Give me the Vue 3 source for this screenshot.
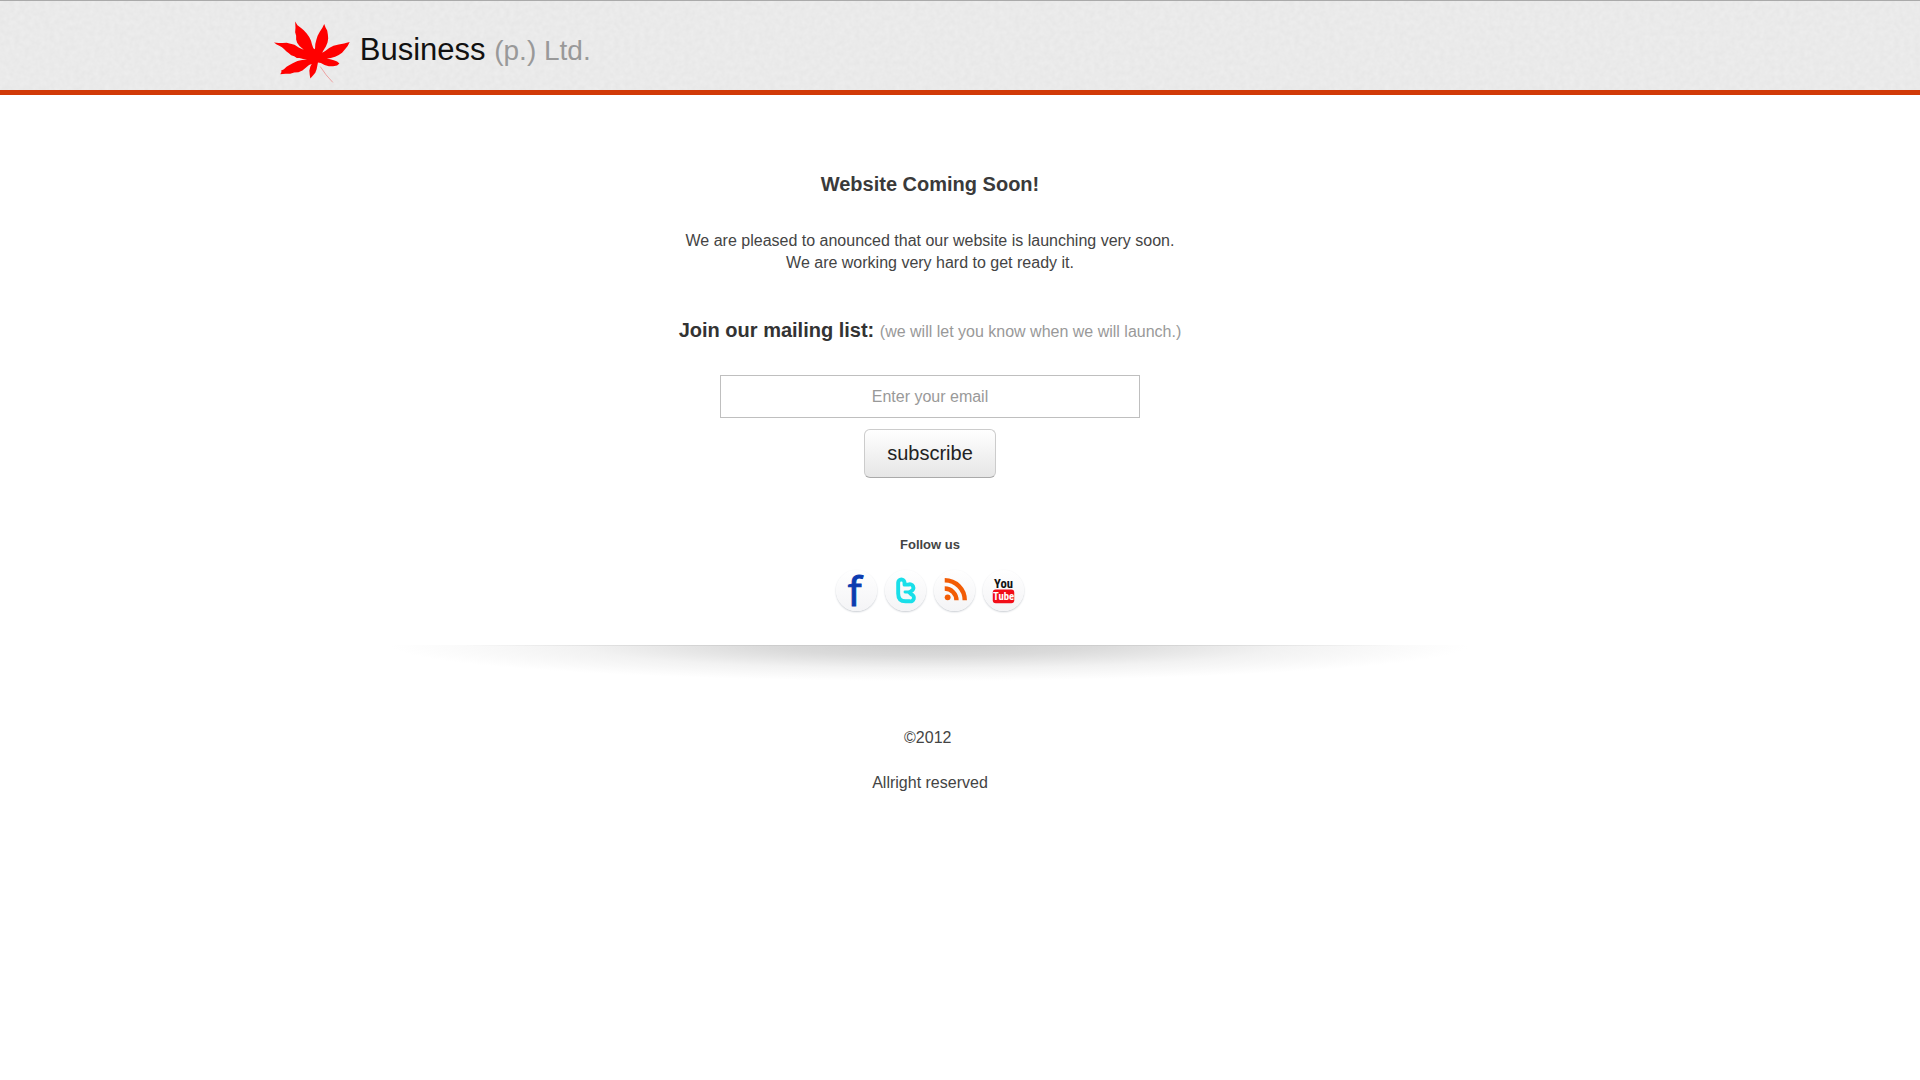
<script setup>
import { ref } from 'vue'

const email = ref('')
</script>

<template>
  <div class="page">
    <header class="header">
      <svg class="grain" aria-hidden="true">
        <filter id="grain" color-interpolation-filters="sRGB">
          <feTurbulence type="fractalNoise" baseFrequency="0.2" numOctaves="2" seed="4" />
          <feColorMatrix values="0.035 0 0 0 0.9  0.035 0 0 0 0.9  0.035 0 0 0 0.9  0 0 0 0 1" />
        </filter>
        <rect width="100%" height="100%" filter="url(#grain)" />
      </svg>
      <a class="brand" href="#">
        <svg class="leaf" viewBox="42 60 230 192" aria-hidden="true">
          <path d="M182 200 Q198 226 220 248" fill="none" stroke="#eda0a0" stroke-width="3" />
          <path
            fill="#f00"
            d="M106 64 L113 75 L122 82 L132 90 L141 100 L149 111 L154 122 L157 133 L161 145 L166 148 L167 132 L170 120 L174 107 L181 94 L188 83 L194 71 L198 82 L203 91 L205 103 L206 115 L204 127 L199 139 L191 152 L188 158 L197 153 L209 144 L222 137 L238 133 L254 130 L271 126 L265 138 L257 148 L248 158 L238 165 L227 170 L214 174 L202 176 L212 178 L223 181 L233 185 L240 191 L233 197 L221 199 L208 199 L195 195 L184 189 L175 188 L173 198 L171 208 L167 219 L160 227 L152 236 L150 225 L149 212 L152 200 L156 192 L148 195 L139 203 L128 212 L116 217 L103 218 L91 222 L77 222 L61 223 L65 216 L63 213 L72 208 L80 201 L89 195 L100 189 L113 183 L127 180 L142 179 L130 177 L119 174 L111 174 L103 169 L94 166 L87 160 L79 154 L73 148 L66 142 L58 137 L50 133 L42 127 L56 129 L68 129 L80 128 L92 131 L104 134 L118 143 L132 149 L119 138 L112 128 L109 118 L109 107 L106 96 L107 82 Z"
          />
        </svg>
        <span class="name">Business <small>(p.) Ltd.</small></span>
      </a>
    </header>

    <main class="content">
      <h1 class="title">Website Coming Soon!</h1>
      <p class="intro">
        We are pleased to anounced that our website is launching very soon.<br />
        We are working very hard to get ready it.
      </p>

      <form class="form" @submit.prevent>
        <label class="label" for="email">Join our mailing list: <small>(we will let you know when we will launch.)</small></label>
        <input id="email" v-model="email" class="email" type="email" placeholder="Enter your email" />
        <button class="subscribe" type="submit">subscribe</button>
      </form>

      <h2 class="follow">Follow us</h2>
      <nav class="social" aria-label="Follow us">
        <a href="#" aria-label="Facebook">
          <svg viewBox="0 0 42 42"><text class="fb" x="19" y="37" text-anchor="middle">f</text></svg>
        </a>
        <a href="#" aria-label="Twitter">
          <svg viewBox="0 0 42 42">
            <path d="M13.500 13a3 3 0 0 1 6.500 0V15H24a3.500 3.500 0 0 1 3 6.500L25 23L27 25a3.500 3.500 0 0 1-2 7H21Q13.500 32 13.500 24Z" fill="none" stroke="#19dfe9" stroke-width="4" stroke-linejoin="round" />
            <path d="M20.500 22.500H26" fill="none" stroke="#19dfe9" stroke-width="3" stroke-linecap="round" />
          </svg>
        </a>
        <a href="#" aria-label="RSS">
          <svg viewBox="0 0 42 42">
            <circle cx="14" cy="28" r="3" fill="#f25c05" />
            <path d="M11 19A12 12 0 0 1 23 31M11 10.500A20.500 20.500 0 0 1 31.500 31" fill="none" stroke="#f25c05" stroke-width="4.500" />
          </svg>
        </a>
        <a href="#" aria-label="YouTube">
          <svg viewBox="0 0 42 42">
            <text class="yt" x="21" y="18" text-anchor="middle">You</text>
            <rect x="10" y="20" width="22" height="14" rx="3" fill="#f20d18" />
            <text class="yt tube" x="21" y="31" text-anchor="middle">Tube</text>
          </svg>
        </a>
      </nav>
    </main>

    <div class="shade"></div>

    <footer class="footer">
      <p>©2012&nbsp;</p>
      <p>Allright reserved</p>
    </footer>
  </div>
</template>

<style>
body {
  margin: 0;
  background: #fff;
}
</style>

<style scoped>
.page {
  font-family: "Liberation Sans", Arial, sans-serif;
  font-size: 16px;
  line-height: 22px;
  color: #444;
}

.header {
  position: relative;
  box-sizing: border-box;
  height: 95px;
  padding: 19px 14%;
  border-top: 1px solid #aaa;
  border-bottom: 5px solid #d13a08;
  background: #eaeaea;
}

.grain {
  position: absolute;
  inset: 0;
  width: 100%;
  height: 100%;
}

.brand {
  position: relative;
  display: flex;
  gap: 10px;
  width: max-content;
  margin-left: 5px;
  color: #111;
  text-decoration: none;
}

.leaf {
  width: 76px;
  height: 64px;
}

.name {
  font-size: 31px;
  line-height: 60px;
}

.name small {
  font-size: 28px;
  color: #999;
}

.content,
.footer {
  display: flex;
  flex-direction: column;
  align-items: center;
  padding-right: 60px;
  text-align: center;
}

.title {
  margin: 77px 0 0;
  font-size: 20px;
  line-height: 24px;
  color: #3a3a3a;
}

.intro {
  margin: 34px 0 0;
}

.form {
  display: flex;
  flex-direction: column;
  align-items: center;
}

.label {
  margin-top: 44px;
  font-size: 20px;
  font-weight: bold;
  line-height: 24px;
  color: #333;
}

.label small {
  font-size: 16px;
  font-weight: normal;
  color: #999;
}

.email {
  box-sizing: border-box;
  width: 420px;
  height: 43px;
  margin-top: 31px;
  padding: 0 12px;
  border: 1px solid #bfbfbf;
  background: #fff;
  font: inherit;
  color: #444;
  text-align: center;
}

.email::placeholder {
  color: #999;
  opacity: 1;
}

.subscribe {
  width: 132px;
  height: 49px;
  margin-top: 11px;
  padding: 0;
  border: 1px solid #ccc;
  border-bottom-color: #aaa;
  border-radius: 6px;
  background: linear-gradient(#fff, #e6e6e6);
  font-family: inherit;
  font-size: 20px;
  color: #222;
}

.follow {
  margin: 56px 0 0;
  font-size: 13px;
  line-height: 22px;
}

.social {
  display: flex;
  gap: 8px;
  margin-top: 14px;
}

.social a {
  width: 41px;
  height: 41px;
  border-radius: 50%;
  background: linear-gradient(#fff, #f4f4f6);
  box-shadow: 0 1px 2px #c8ccd2;
}

.social svg {
  display: block;
  overflow: visible;
}

.fb {
  font-family: "Noto Sans", sans-serif;
  font-size: 41px;
  fill: #0b3bb0;
  stroke: #0b3bb0;
  stroke-width: 1px;
}

.yt {
  font-family: "Roboto Condensed", "Open Sans Condensed", "DejaVu Sans Condensed", sans-serif;
  font-size: 13px;
  font-weight: bold;
  fill: #111;
}

.tube {
  font-size: 11px;
  fill: #fff;
}

.shade {
  height: 40px;
  margin: 34px 60px 0 0;
  background:
    radial-gradient(ellipse 540px 1px at 50% 0, #c4c4c4, #c8c8c8 40%, transparent) no-repeat 0 0 / 100% 1px,
    radial-gradient(ellipse 540px 36px at 50% 0, #cfcfcf, #dadada 30%, #f2f2f2 65%, #fff);
}

.footer {
  gap: 23px;
  padding-top: 42px;
}

.footer p {
  margin: 0;
}
</style>
